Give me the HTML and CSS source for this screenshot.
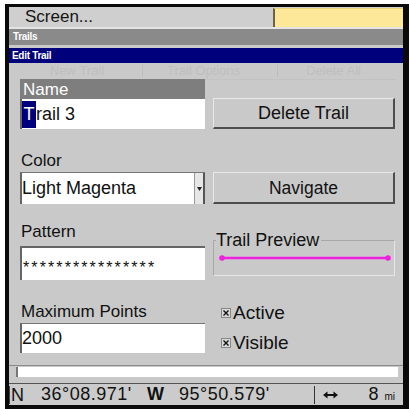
FILE: index.html
```html
<!DOCTYPE html>
<html>
<head>
<meta charset="utf-8">
<link rel="stylesheet" href="styles.css">
</head>
<body>
<div class="frame">
  <div class="topbar">
    <div class="screen">Screen...</div>
    <div class="yellow"></div>
  </div>
  <div class="trails">Trails</div>
  <div class="edit">Edit Trail</div>
  <div class="panel">
    <div class="ghost">
      <span class="g1">New Trail</span><span class="gs"></span><span class="g2">Trail Options</span><span class="gs"></span><span class="g3">Delete All</span>
    </div>
    <div class="row row1">
      <div class="col">
        <div class="label-dark">Name</div>
        <div class="input"><span class="cursor">T</span>rail 3</div>
      </div>
      <div class="col col-right">
        <div class="btn">Delete Trail</div>
      </div>
    </div>
    <div class="row row2">
      <div class="col">
        <div class="label">Color</div>
        <div class="input select"><span class="sel-text">Light Magenta</span><span class="arrow"><svg width="5" height="4" viewBox="0 0 5 4"><path d="M0 0H5L2.5 4Z" fill="#222"/></svg></span></div>
      </div>
      <div class="col col-right">
        <div class="btn">Navigate</div>
      </div>
    </div>
    <div class="row row3">
      <div class="col">
        <div class="label">Pattern</div>
        <div class="input pattern">****************</div>
      </div>
      <div class="col col-right">
        <div class="group">
          <span class="legend">Trail Preview</span>
          <svg class="line" width="172" height="8" viewBox="0 0 172 8"><line x1="3" y1="4" x2="169" y2="4" stroke="#f020e0" stroke-width="2.5"/><circle cx="3" cy="4" r="2.8" fill="#f020e0"/><circle cx="169" cy="4" r="2.8" fill="#f020e0"/></svg>
        </div>
      </div>
    </div>
    <div class="row row4">
      <div class="col">
        <div class="label">Maximum Points</div>
        <div class="input">2000</div>
      </div>
      <div class="col col-right checks">
        <div class="check"><span class="box"><svg width="8" height="8" viewBox="0 0 8 8"><path d="M1.5 1.5L6.5 6.5M6.5 1.5L1.5 6.5" stroke="#111" stroke-width="1.4"/></svg></span>Active</div>
        <div class="check"><span class="box"><svg width="8" height="8" viewBox="0 0 8 8"><path d="M1.5 1.5L6.5 6.5M6.5 1.5L1.5 6.5" stroke="#111" stroke-width="1.4"/></svg></span>Visible</div>
      </div>
    </div>
  </div>
  <div class="bottom">
    <div class="whitebar"></div>
  </div>
  <div class="status">
    <span class="s-n">N</span>
    <span class="s-lat">36°08.971'</span>
    <span class="s-w">W</span>
    <span class="s-lon">95°50.579'</span>
    <span class="s-sep"></span>
    <span class="s-arrow"><svg width="15" height="8" viewBox="0 0 15 8"><path d="M3 4H12" stroke="#111" stroke-width="2"/><path d="M0 4L4.5 0.5V7.5Z M15 4L10.5 0.5V7.5Z" fill="#111"/></svg></span>
    <span class="s-dist">8 <small>mi</small></span>
  </div>
</div>
</body>
</html>
```
FILE: styles.css
```css
html, body {
  margin: 0;
  padding: 0;
  background: #fff;
}
body {
  width: 409px;
  height: 409px;
  overflow: hidden;
  font-family: "Liberation Sans", Arial, sans-serif;
  color: #111;
}
.frame {
  margin: 4px 0 0 5px;
  width: 394px;
  height: 398px;
  background: #c9c9c9;
  border-style: solid;
  border-color: #0a0a0a;
  border-width: 3px 6px 4px 4px;
  display: flex;
  flex-direction: column;
}
.topbar {
  height: 20px;
  display: flex;
  background: #cfcfcf;
  border-bottom: 2px solid #e4e4e4;
}
.screen {
  flex: 1;
  font-size: 17px;
  line-height: 20px;
  padding-left: 16px;
  color: #151515;
}
.yellow {
  width: 128px;
  margin-top: 1px;
  height: 18px;
  background: #fde89a;
  border-left: 2px solid #6a6248;
  border-top: 1px solid #e8d27a;
}
.trails {
  height: 16px;
  background: #8a8a8a;
  color: #fff;
  font-size: 10px;
  font-weight: bold;
  line-height: 16px;
  padding-left: 4px;
  letter-spacing: -0.3px;
}
.edit {
  margin-top: 3px;
  height: 15px;
  background: #00007c;
  color: #fff;
  font-size: 10px;
  font-weight: bold;
  line-height: 15px;
  padding-left: 3px;
  letter-spacing: -0.3px;
}
.panel {
  height: 303px;
  padding-left: 11px;
  display: flex;
  flex-direction: column;
  box-sizing: border-box;
}
.ghost {
  height: 17px;
  box-sizing: border-box;
  display: flex;
  align-items: center;
  font-size: 13px;
  line-height: 14px;
  color: #bfbfbf;
  margin-left: 12px;
  margin-right: 6px;
  white-space: nowrap;
  border-bottom: 1px solid #c3c3c3;
  margin-bottom: -1px;
}
.g1 { width: 110px; padding-left: 18px; box-sizing: border-box; }
.g2 { width: 134px; padding-left: 24px; box-sizing: border-box; }
.g3 { padding-left: 28px; }
.gs { width: 1px; height: 12px; background: #bdbdbd; }
.row {
  display: flex;
  gap: 8px;
}
.col {
  width: 185px;
  display: flex;
  flex-direction: column;
}
.col-right {
  width: 182px;
  justify-content: flex-end;
}
.label-dark {
  height: 20px;
  background: #7e7e7e;
  color: #fff;
  font-size: 17px;
  line-height: 21px;
  padding-left: 3px;
}
.label {
  height: 20px;
  font-size: 17px;
  line-height: 20px;
  padding-left: 1px;
}
.input {
  height: 30px;
  background: #fff;
  border-left: 2px solid #666;
  font-size: 18px;
  padding-left: 0;
  display: flex;
  align-items: center;
  box-sizing: border-box;
}
.cursor {
  background: #00007c;
  color: #fff;
  display: inline-block;
  height: 27px;
  line-height: 27px;
  width: 14px;
  text-align: center;
}
.btn {
  height: 31px;
  box-sizing: border-box;
  background: #c9c9c9;
  border-style: solid;
  border-width: 1px 2px 2px 1px;
  border-color: #e8e8e8 #4d4d4d #4d4d4d #e8e8e8;
  font-size: 18px;
  line-height: 28px;
  text-align: center;
}
.row2 { margin-top: 22px; }
.row2 .label { margin-bottom: 1px; }
.row2 .input { height: 32px; border-top: 1px solid #777; }
.row2 .btn { height: 32px; line-height: 30px; font-size: 17.5px; }
.select {
  justify-content: space-between;
}
.arrow {
  width: 11px;
  height: 31px;
  box-sizing: border-box;
  border-left: 1px solid #999;
  border-right: 2px solid #555;
  background: #e6e6e6;
  display: flex;
  align-items: center;
  justify-content: center;
}
.row3 { margin-top: 18px; }
.row3 .label { margin-bottom: 4px; }
.pattern {
  height: 34px;
  border-top: 2px solid #666;
  font-size: 16px;
  letter-spacing: 2.1px;
  padding-top: 8px;
  padding-left: 1px;
}
.group {
  position: relative;
  height: 36px;
  box-sizing: border-box;
  border: 1px solid #a8a8a8;
  border-right-color: #e6e6e6;
  border-bottom-color: #e6e6e6;
  margin-bottom: 4px;
  display: flex;
  align-items: center;
  padding-left: 5px;
}
.legend {
  position: absolute;
  left: 2px;
  top: -11px;
  background: #c9c9c9;
  font-size: 18px;
  line-height: 20px;
  padding-right: 2px;
}
.row4 { margin-top: 22px; }
.row4 .label { margin-bottom: 1px; }
.row4 .input {
  height: 30px;
  border-top: 1px solid #777;
}
.checks {
  justify-content: flex-start;
  padding-top: 1px;
  padding-left: 8px;
  gap: 10px;
  box-sizing: border-box;
}
.check {
  display: flex;
  align-items: center;
  font-size: 19px;
  line-height: 20px;
  height: 20px;
}
.box {
  width: 8px;
  height: 8px;
  background: #d8d8d8;
  border: 1px solid #888;
  margin-right: 2px;
  display: flex;
}
.bottom {
  height: 18px;
  border-top: 1px solid #8a8a8a;
  padding: 1px 5px 0 7px;
  display: flex;
  align-items: flex-start;
  box-sizing: border-box;
}
.whitebar {
  flex: 1;
  height: 10px;
  background: #fff;
  border-left: 2px solid #777;
}
.status {
  flex: 1;
  border-top: 1px solid #555;
  display: flex;
  align-items: center;
  font-size: 18px;
  letter-spacing: 0.5px;
  background: #cbcbcb;
}
.s-n {
  border-left: 1px solid #444;
  padding-left: 1px;
  width: 18px;
  line-height: 18px;
}
.s-lat { margin-left: 12px; width: 94px; }
.s-w { margin-left: 12px; width: 16px; font-weight: bold; }
.s-lon { margin-left: 16px; width: 135px; }
.s-sep {
  width: 1px;
  height: 18px;
  background: #333;
}
.s-arrow { margin-left: 8px; display: flex; align-items: center; }
.s-dist {
  margin-left: auto;
  margin-right: 8px;
}
.s-dist small { font-size: 10px; letter-spacing: 0; }
```
